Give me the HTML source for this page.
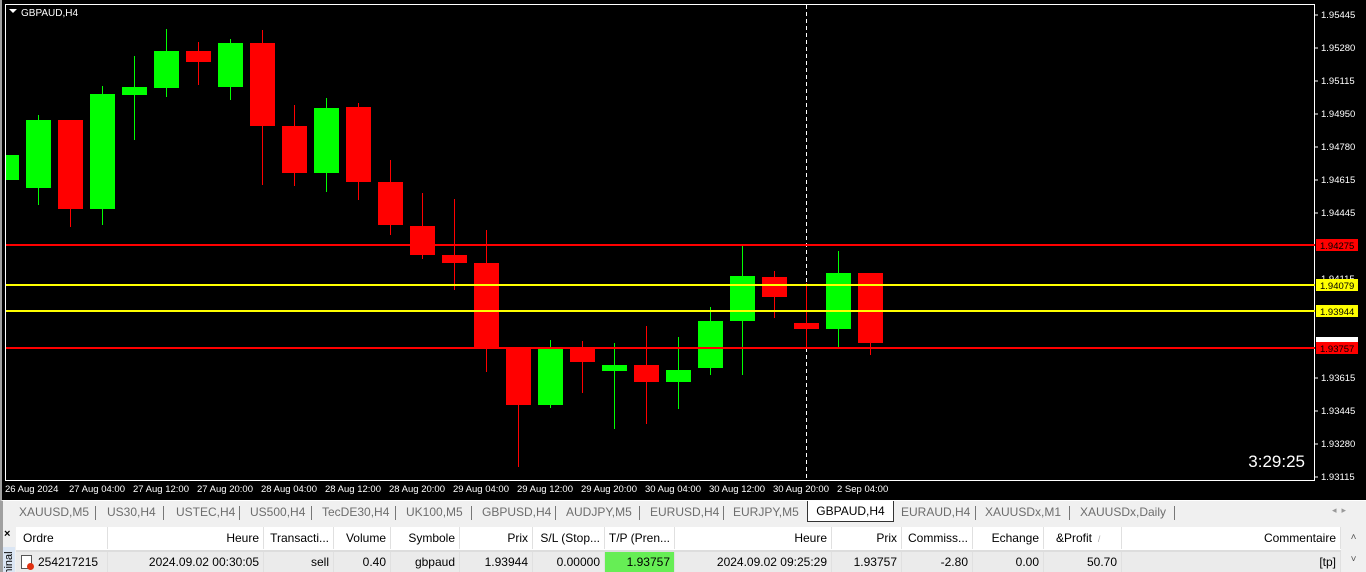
<!DOCTYPE html>
<html><head><meta charset="utf-8"><style>
*{margin:0;padding:0;box-sizing:border-box}
body{width:1366px;height:572px;overflow:hidden;background:#f0f0f0;font-family:"Liberation Sans",sans-serif;position:relative}
#chart{position:absolute;left:0;top:0}
.tabs{position:absolute;left:0;top:500px;width:1366px;height:23px;background:#f0f0f0;border-left:3px solid #a0a0a0;border-top:1px solid #fff}
.tab{position:absolute;top:4px;font-size:12px;color:#6d6d6d;white-space:nowrap}
.sep{position:absolute;top:5px;width:1px;height:14px;background:#777}
.act{position:absolute;left:804px;top:0;width:87px;height:21px;background:#fff;border:1px solid #333;border-top:none;font-size:12px;color:#000;text-align:center;line-height:20px}
.tbl{position:absolute;left:16px;top:527px;width:1350px;height:45px;background:#fff}
.c{position:absolute;font-size:12px;color:#000;white-space:nowrap;text-align:right;height:22px;line-height:22px;padding-right:4px;border-right:1px solid #e0e0e0}
.row{position:absolute;left:0;top:24px;height:21px;width:1325px;background:#ebebeb;border-top:1px solid #ddd}
</style></head><body>
<svg id="chart" width="1366" height="501" xmlns="http://www.w3.org/2000/svg" font-family="Liberation Sans, sans-serif">
<rect x="0" y="0" width="1366" height="501" fill="#000"/>
<rect x="0" y="0" width="2" height="501" fill="#a0a0a0"/>
<rect x="5.5" y="4.5" width="1309" height="476" fill="none" stroke="#fff" stroke-width="1"/>
<line x1="806.5" y1="5" x2="806.5" y2="480" stroke="#fff" stroke-dasharray="4,3"/>
<g fill="#00ff00" stroke="none">
<rect x="6" y="155" width="13" height="25"/>
<rect x="38" y="115" width="1" height="90"/><rect x="26" y="120" width="25" height="68"/>
<rect x="102" y="86" width="1" height="139"/><rect x="90" y="94" width="25" height="115"/>
<rect x="134" y="56" width="1" height="84"/><rect x="122" y="87" width="25" height="8"/>
<rect x="166" y="29" width="1" height="68"/><rect x="154" y="51" width="25" height="37"/>
<rect x="230" y="39" width="1" height="61"/><rect x="218" y="43" width="25" height="44"/>
<rect x="326" y="98" width="1" height="94"/><rect x="314" y="108" width="25" height="65"/>
<rect x="550" y="340" width="1" height="68"/><rect x="538" y="348" width="25" height="57"/>
<rect x="614" y="343" width="1" height="86"/><rect x="602" y="365" width="25" height="6"/>
<rect x="678" y="337" width="1" height="72"/><rect x="666" y="370" width="25" height="12"/>
<rect x="710" y="307" width="1" height="68"/><rect x="698" y="321" width="25" height="47"/>
<rect x="742" y="246" width="1" height="129"/><rect x="730" y="276" width="25" height="45"/>
<rect x="838" y="251" width="1" height="97"/><rect x="826" y="273" width="25" height="56"/>
</g>
<g fill="#ff0000">
<rect x="70" y="120" width="1" height="107"/><rect x="58" y="120" width="25" height="89"/>
<rect x="198" y="42" width="1" height="43"/><rect x="186" y="51" width="25" height="11"/>
<rect x="262" y="30" width="1" height="155"/><rect x="250" y="43" width="25" height="83"/>
<rect x="294" y="105" width="1" height="81"/><rect x="282" y="126" width="25" height="47"/>
<rect x="358" y="103" width="1" height="97"/><rect x="346" y="107" width="25" height="75"/>
<rect x="390" y="160" width="1" height="75"/><rect x="378" y="182" width="25" height="43"/>
<rect x="422" y="193" width="1" height="66"/><rect x="410" y="226" width="25" height="29"/>
<rect x="454" y="199" width="1" height="91"/><rect x="442" y="255" width="25" height="8"/>
<rect x="486" y="230" width="1" height="142"/><rect x="474" y="263" width="25" height="86"/>
<rect x="518" y="348" width="1" height="119"/><rect x="506" y="348" width="25" height="57"/>
<rect x="582" y="341" width="1" height="52"/><rect x="570" y="348" width="25" height="14"/>
<rect x="646" y="326" width="1" height="98"/><rect x="634" y="365" width="25" height="17"/>
<rect x="774" y="271" width="1" height="47"/><rect x="762" y="277" width="25" height="20"/>
<rect x="806" y="283" width="1" height="64"/><rect x="794" y="323" width="25" height="6"/>
<rect x="870" y="273" width="1" height="82"/><rect x="858" y="273" width="25" height="70"/>
</g>
<rect x="6" y="244" width="1309" height="2" fill="#ff0000"/>
<rect x="6" y="284" width="1309" height="2" fill="#ffff00"/>
<rect x="6" y="310" width="1309" height="2" fill="#ffff00"/>
<rect x="6" y="347" width="1309" height="2" fill="#ff0000"/>
<path d="M9 9 L17 9 L13 13 Z" fill="#fff"/>
<text x="21" y="16" fill="#fff" font-size="10">GBPAUD,H4</text>
<g fill="#fff" font-size="9.5">
<text x="1321" y="18">1.95445</text><text x="1321" y="51">1.95280</text><text x="1321" y="84">1.95115</text>
<text x="1321" y="117">1.94950</text><text x="1321" y="150">1.94780</text><text x="1321" y="183">1.94615</text>
<text x="1321" y="216">1.94445</text><text x="1321" y="282">1.94115</text><text x="1321" y="345">1.93780</text>
<text x="1321" y="381">1.93615</text><text x="1321" y="414">1.93445</text><text x="1321" y="447">1.93280</text><text x="1321" y="480">1.93115</text>
</g>
<g stroke="#fff"><line x1="1315" y1="15" x2="1318" y2="15"/><line x1="1315" y1="48" x2="1318" y2="48"/><line x1="1315" y1="81" x2="1318" y2="81"/><line x1="1315" y1="114" x2="1318" y2="114"/><line x1="1315" y1="147" x2="1318" y2="147"/><line x1="1315" y1="180" x2="1318" y2="180"/><line x1="1315" y1="213" x2="1318" y2="213"/><line x1="1315" y1="378" x2="1318" y2="378"/><line x1="1315" y1="411" x2="1318" y2="411"/><line x1="1315" y1="444" x2="1318" y2="444"/><line x1="1315" y1="477" x2="1318" y2="477"/></g>
<rect x="1316" y="239" width="42" height="12" fill="#ff0000"/><text x="1320" y="249" font-size="9.5" fill="#000">1.94275</text>
<rect x="1316" y="279" width="42" height="12" fill="#ffff00"/><text x="1320" y="289" font-size="9.5" fill="#000">1.94079</text>
<rect x="1316" y="305" width="42" height="12" fill="#ffff00"/><text x="1320" y="315" font-size="9.5" fill="#000">1.93944</text>
<rect x="1316" y="337" width="42" height="5" fill="#fff"/>
<rect x="1316" y="342" width="42" height="12" fill="#ff0000"/><text x="1320" y="352" font-size="9.5" fill="#000">1.93757</text>
<text x="1305" y="467" text-anchor="end" font-size="17" fill="#fff">3:29:25</text>
<g fill="#fff" font-size="9.5">
<text x="5" y="492">26 Aug 2024</text><text x="69" y="492">27 Aug 04:00</text><text x="133" y="492">27 Aug 12:00</text>
<text x="197" y="492">27 Aug 20:00</text><text x="261" y="492">28 Aug 04:00</text><text x="325" y="492">28 Aug 12:00</text>
<text x="389" y="492">28 Aug 20:00</text><text x="453" y="492">29 Aug 04:00</text><text x="517" y="492">29 Aug 12:00</text>
<text x="581" y="492">29 Aug 20:00</text><text x="645" y="492">30 Aug 04:00</text><text x="709" y="492">30 Aug 12:00</text>
<text x="773" y="492">30 Aug 20:00</text><text x="837" y="492">2 Sep 04:00</text>
</g>
</svg>
<div class="tabs">
<span class="tab" style="left:16px">XAUUSD,M5</span><span class="sep" style="left:92px"></span>
<span class="tab" style="left:104px">US30,H4</span><span class="sep" style="left:160px"></span>
<span class="tab" style="left:173px">USTEC,H4</span><span class="sep" style="left:236px"></span>
<span class="tab" style="left:247px">US500,H4</span><span class="sep" style="left:308px"></span>
<span class="tab" style="left:319px">TecDE30,H4</span><span class="sep" style="left:392px"></span>
<span class="tab" style="left:403px">UK100,M5</span><span class="sep" style="left:468px"></span>
<span class="tab" style="left:479px">GBPUSD,H4</span><span class="sep" style="left:552px"></span>
<span class="tab" style="left:563px">AUDJPY,M5</span><span class="sep" style="left:636px"></span>
<span class="tab" style="left:647px">EURUSD,H4</span><span class="sep" style="left:720px"></span>
<span class="tab" style="left:730px">EURJPY,M5</span>
<div class="act">GBPAUD,H4</div>
<span class="tab" style="left:898px">EURAUD,H4</span><span class="sep" style="left:972px"></span>
<span class="tab" style="left:982px">XAUUSDx,M1</span><span class="sep" style="left:1066px"></span>
<span class="tab" style="left:1077px">XAUUSDx,Daily</span><span class="sep" style="left:1171px"></span>
<span class="tab" style="left:1329px;color:#999;font-size:9px">◂ &nbsp;▸</span>
</div>
<div style="position:absolute;left:0;top:523px;width:16px;height:49px;background:#f0f0f0;border-left:3px solid #a0a0a0"></div>
<div style="position:absolute;left:4px;top:528px;font-size:11px;font-weight:bold">×</div>
<div style="position:absolute;left:3px;top:547px;width:12px;height:25px;background:#dbe6f4;overflow:hidden"><div style="transform:rotate(-90deg);transform-origin:left top;position:absolute;left:0;top:46px;font-size:11px;color:#000;white-space:nowrap">Terminal</div></div>
<div class="tbl">
<div style="position:absolute;left:0;top:0;width:1325px;height:24px;background:#fff;border-bottom:1px solid #ddd"></div>
<div class="c" style="left:0;width:92px;text-align:left;padding-left:7px">Ordre</div>
<div class="c" style="left:92px;width:156px">Heure</div>
<div class="c" style="left:248px;width:70px">Transacti...</div>
<div class="c" style="left:318px;width:57px">Volume</div>
<div class="c" style="left:375px;width:69px">Symbole</div>
<div class="c" style="left:444px;width:73px">Prix</div>
<div class="c" style="left:517px;width:72px">S/L (Stop...</div>
<div class="c" style="left:589px;width:70px">T/P (Pren...</div>
<div class="c" style="left:659px;width:157px">Heure</div>
<div class="c" style="left:816px;width:70px">Prix</div>
<div class="c" style="left:886px;width:71px">Commiss...</div>
<div class="c" style="left:957px;width:71px">Echange</div>
<div class="c" style="left:1028px;width:78px;text-align:left;padding-left:12px">&amp;Profit <span style="color:#aaa;font-size:9px">&nbsp;/</span></div>
<div class="c" style="left:1106px;width:219px">Commentaire</div>
<div class="row">
<div class="c" style="left:0;width:92px;text-align:left;padding-left:22px;height:20px;line-height:20px">254217215</div>
<div style="position:absolute;left:5px;top:3px;width:11px;height:14px;background:#fff;border:1px solid #555"></div>
<div style="position:absolute;left:11px;top:11px;width:7px;height:7px;border-radius:50%;background:#e03010"></div>
<div class="c" style="left:92px;width:156px;height:20px;line-height:20px">2024.09.02 00:30:05</div>
<div class="c" style="left:248px;width:70px;height:20px;line-height:20px">sell</div>
<div class="c" style="left:318px;width:57px;height:20px;line-height:20px">0.40</div>
<div class="c" style="left:375px;width:69px;height:20px;line-height:20px">gbpaud</div>
<div class="c" style="left:444px;width:73px;height:20px;line-height:20px">1.93944</div>
<div class="c" style="left:517px;width:72px;height:20px;line-height:20px">0.00000</div>
<div class="c" style="left:589px;width:70px;height:20px;line-height:20px;background:#66ee55">1.93757</div>
<div class="c" style="left:659px;width:157px;height:20px;line-height:20px">2024.09.02 09:25:29</div>
<div class="c" style="left:816px;width:70px;height:20px;line-height:20px">1.93757</div>
<div class="c" style="left:886px;width:71px;height:20px;line-height:20px">-2.80</div>
<div class="c" style="left:957px;width:71px;height:20px;line-height:20px">0.00</div>
<div class="c" style="left:1028px;width:78px;height:20px;line-height:20px">50.70</div>
<div class="c" style="left:1106px;width:219px;height:20px;line-height:20px">[tp]</div>
</div>
<div style="position:absolute;left:1325px;top:0;width:25px;height:45px;background:#f0f0f0;font-size:10px;color:#555;text-align:center;line-height:22px">˄<br>˅</div>
</div>
</body></html>
